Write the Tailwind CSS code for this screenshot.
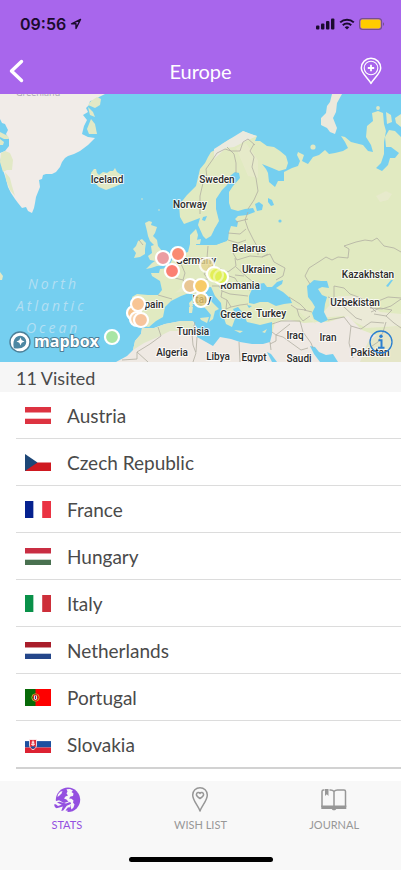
<!DOCTYPE html>
<html lang="en">
  <head>
    <meta charset="UTF-8" />
    <meta name="viewport" content="width=device-width, initial-scale=1.0" />
    <title>Europe - Stats</title>
    <script src="https://cdn.jsdelivr.net/npm/@tailwindcss/browser@4"></script>
  </head>
  <body class="bg-white font-['Lato',sans-serif] text-[#4a4a4a]">
    <div class="flex min-h-screen flex-col">
      <!-- ===== Header ===== -->
      <header class="bg-[#a866ec] text-white">
        <!-- Status bar -->
        <div class="flex h-12 items-center justify-between pr-4 pl-5 text-[#1b0b2e]">
          <div class="flex items-center gap-1">
            <span class="font-['Inter',sans-serif] text-[16px] leading-5 font-semibold">09:56</span>
            <svg class="size-3" viewBox="0 0 12 12" fill="none" stroke="currentColor" stroke-width="1.4" stroke-linejoin="round">
              <path d="M10.5 1.5 1.5 5.8H6v4.7z" />
            </svg>
          </div>
          <div class="flex items-center gap-1">
            <svg class="h-3 w-[19px]" viewBox="0 0 19 12" fill="currentColor">
              <rect x="0" y="7.5" width="3.4" height="4" rx="1" />
              <rect x="5" y="5.5" width="3.4" height="6" rx="1" />
              <rect x="10" y="3" width="3.4" height="8.5" rx="1" />
              <rect x="15" y="0.5" width="3.4" height="11" rx="1" />
            </svg>
            <svg class="h-3 w-4" viewBox="0 0 16 12" fill="none" stroke="currentColor" stroke-width="2">
              <path d="M1.2 4.4a9.8 9.8 0 0 1 13.6 0" />
              <path d="M3.8 7.3a6 6 0 0 1 8.4 0" />
              <path d="M8 11.6 5.7 9.3a3.3 3.3 0 0 1 4.6 0z" fill="currentColor" stroke="none" />
            </svg>
            <svg class="h-3 w-[26px]" viewBox="0 0 26 12">
              <rect x="0.6" y="0.6" width="22" height="10.8" rx="3" fill="none" stroke="#76508c" stroke-width="1.1" />
              <rect x="1.6" y="1.6" width="20" height="8.8" rx="1.8" fill="#ffcc00" />
              <path d="M24 4.2v3.6c1.4-.5 1.4-3.1 0-3.6z" fill="#76508c" />
            </svg>
          </div>
        </div>
        <!-- Title bar -->
        <div class="grid h-[46px] grid-cols-[1fr_auto_1fr] items-center px-2">
          <button aria-label="Back" class="justify-self-start">
            <svg class="h-6 w-4" viewBox="0 0 16 24" fill="none" stroke="currentColor" stroke-width="3.4" stroke-linecap="round" stroke-linejoin="round">
              <path d="M13.5 2.5 3.5 12l10 9.5" />
            </svg>
          </button>
          <h1 class="text-[20px] leading-6">Europe</h1>
          <button aria-label="Add place" class="justify-self-end pr-2">
            <svg class="h-7 w-7" viewBox="0 0 28 28" fill="none" stroke="currentColor" stroke-width="1.5">
              <path d="M14 26.5C11.5 21.5 4.3 16.5 4.3 11a9.7 9.7 0 0 1 19.4 0C23.7 16.5 16.5 21.5 14 26.5z" stroke-linejoin="round" />
              <circle cx="14" cy="11" r="6.8" stroke-width="1.1" />
              <path d="M14 7.8v6.4M10.8 11h6.4" stroke-width="1.8" />
            </svg>
          </button>
        </div>
      </header>

      <!-- ===== Map ===== -->
      <section class="relative" aria-label="Map">
        <svg class="block h-auto w-full" viewBox="0 94 401 268">
          <rect x="0" y="94" width="401" height="268" fill="#75cff0" />

          <!-- Greenland -->
          <path fill="#f1ece8" d="M0 94H105L99 97 95 100 90 101 89 105 86 108 88 112 83 115 87 120 84 126 82 134 88 137 95 138 88 145 80 151 74 154 68 156 65 158 62 162 60 167 56 172 52 174 46 174 43 175 42 179 39 180 40 187 38 192 36 197 35 203 34 208 32 213 28 211 26 207 22 208 18 203 15 199 11 193 8 187 6 179 3 170 0 158 0 153 5 151 9 146 9 139 6 134 8 130 5 124 2 123 0 119z" />
          <g fill="#e2e9c6">
            <path d="M1 153 5 151 10 153 13 160 12 170 7 170 3 172 0 162z" />
            <path d="M5 172 10 178 12 186 15 196 10 190 6 180z" />
            <path d="M91 101 97 97 101 99 100 105 95 108 88 105z" />
            <path d="M88 107 93 112 95 117 90 115z" />
            <path d="M91 119 95 124 97 134 89 134 87 129z" />
            <path d="M0 132 8 136 9 139 4 139 0 137z" />
            <path d="M0 139 4 142 3 145 0 145z" />
            <path d="M0 272 3 276 2 280 0 280z" />
          </g>

          <!-- Islands of the north and west -->
          <g fill="#e1e9c4">
            <path d="M91 173 94 169 96 169 97 173 99 175 103 172 107 173 110 171 113 171 115 168 117 172 120 174 123 179 121 184 114 187 106 190 99 187 96 184 97 179 92 177z" />
            <path d="M145 223 149 221 152 222 151 225 157 227 155 233 153 236 157 240 158 246 162 251 163 256 169 256 168 261 164 265 157 266 151 268 146 269 152 263 155 261 150 260 148 256 152 253 151 246 154 245 150 241 148 236 147 231z" />
            <path d="M133 249 136 246 138 241 142 239 146 243 145 249 145 254 140 257 134 258 136 253z" />
            <circle cx="313" cy="147" r="2.6" />
            <circle cx="378" cy="108" r="1.9" />
            <path d="M386 112 391 115 392 122 387 124z" />
            <path d="M395 118 401 114 401 127 396 123z" />
            <circle cx="142" cy="199" r=".8" />
            <circle cx="159" cy="210" r=".8" />
          </g>
          <path fill="#ece9dc" d="M332 94H342L337 103 336 112 333 118 337 128 335 134 330 132 327 128 321 125 321 118 326 113 327 106 330 102z" />

          <!-- Europe and Asia -->
          <path fill="#e1eac1" d="M200 169 205 163 208 157 211 152 217 149 222 144 230 139 238 137 243 131 250 134 257 136 255 141 260 141 267 146 274 147 280 151 286 156 288 163 286 169 279 171 272 168 262 164 266 169 268 173 269 182 275 187 278 181 284 181 284 172 292 168 298 166 300 161 297 155 298 152 304 155 302 161 308 164 313 157 319 155 325 150 329 154 335 153 343 151 348 148 345 142 341 136 345 137 351 142 363 145 368 151 373 152 371 145 366 137 367 126 373 121 372 113 378 111 383 113 384 124 386 131 384 142 384 154 381 163 376 168 382 171 388 165 390 158 395 158 399 153 391 147 386 147 385 137 389 130 395 131 401 137V362H262L272 340 272 322 260 325 247 322 243 313 238 307 233 309 236 316 232 327 226 324 224 318 222 311 221 303 215 296 211 287 205 288 206 295 212 302 219 309 215 311 213 319 209 322 211 315 206 309 200 303 195 295 189 293 181 296 175 299 171 301 165 307 163 317 156 321 149 327 142 326 138 323 131 322 132 312 134 304 132 297 137 294 148 295 158 295 162 290 160 281 152 276 151 273 159 273 160 269 168 268 172 260 181 254 188 252 190 244 190 235 196 229 198 235 196 245 203 245 215 245 227 241 228 228 222 222 215 228 211 236 206 239 203 236 198 225 200 218 192 221 184 224 180 217 179 205 187 195 196 186z" />
          <!-- Africa and Arabia -->
          <path fill="#efe9e3" d="M116 362 127 356 133 350 135 341 141 334 142 328 154 328 165 324 181 321 193 321 197 328 197 337 206 342 213 346 220 337 231 339 240 342 252 344 263 344 270 342 275 322 290 320 304 323 318 322 328 322 348 316 362 330 378 336 401 334V362z" />
          <path fill="#e1e8c8" d="M142 328 154 328 165 324 181 321 193 321 195 333 186 331 170 331 158 337 144 343 133 350 135 341 141 334z" />
          <path fill="#efeae0" d="M318 318 338 296 360 296 380 312 401 314V326L366 328 344 316z" opacity=".7" />
          <path fill="#e5e6c8" d="M368 342 386 328 401 326V362H360z" />
          <path fill="#e9ead0" d="M376 196 386 191 392 194 388 200 380 202z" opacity=".7" />
          <path fill="#ebeadf" d="M214 149 230 139 243 131 257 136 246 141 234 147 226 148 214 159z" />
          <path fill="#e7eacb" d="M175 293 188 281 198 282 190 290zM290 304 308 310 316 324 304 316zM236 148 246 143 258 160 258 178 248 176z" opacity=".8" />

          <!-- Inland seas, gulfs and lakes -->
          <g fill="#75cff0">
            <path d="M230 176 235 172 239 173 240 178 233 186 229 192 229 203 231 209 238 211 245 209 253 208 255 212 247 215 238 216 235 219 238 222 237 227 231 226 229 232 228 240 216 245 211 240 215 228 219 221 216 209 216 199 222 190 227 185z" />
            <path d="M255 204 259 202 263 205 262 210 257 211z" />
            <path d="M268 198 272 200 274 205 271 206 268 202z" />
            <circle cx="280" cy="221" r="1.6" />
            <path d="M203 217 207 216 205 221 202 220z" />
            <path d="M249 296 253 287 258 284 264 283 267 287 272 287 277 282 283 280 282 284 276 288 283 292 290 298 292 303 284 304 276 306 268 302 260 302 254 304 249 303z" />
            <path d="M247 305 252 306 249 308z" />
            <path d="M307 286 314 280 321 281 327 281 329 288 322 287 318 289 322 295 327 297 325 304 324 312 328 320 321 323 314 319 312 313 315 307 312 302 308 297z" />
            <path d="M310 346 315 347 319 352 326 355 333 354 338 362H320L314 354z" />
            <path d="M267 352 271 354 277 362H272z" />
            <path d="M386 286 391 280 393 280 388 287zM334 299 337 300 336 304 334 303z" />
          </g>
          <!-- Mediterranean islands and Denmark -->
          <g fill="#e1e9c4">
            <path d="M189 303 192 300 193 306 190 308zM189 307 193 307 192 313 189 313zM200 318 209 317 207 323 201 320zM234 330 243 331 240 333zM262 332 267 329 265 333z" />
            <path d="M196 240 201 239 200 244 196 244z" />
          </g>

          <!-- Country borders -->
          <g fill="none" stroke="#b1afa2" stroke-width=".8" stroke-linejoin="round">
            <path d="M200 214 200 196 203 183 207 178 206 169 213 159 217 153 225 149 231 151 240 151 243 142 248 139 255 145" />
            <path d="M227 147 234 154 236 163 236 173M254 144 250 151 254 157 252 167 256 178 258 191 254 200 248 209" />
            <path d="M248 212 245 220 248 229 253 239 258 248 258 255M236 222 248 219M228 233 240 234 246 229M228 240 238 243 246 240" />
            <path d="M232 243 233 253 237 260 250 256 262 257 268 254M208 246 207 258 209 266 218 268 228 272 236 266 235 258" />
            <path d="M262 257 270 254 274 262 285 268 283 276 276 280M177 258 182 266 185 273 183 280 175 278 169 272M183 280 188 286 189 293M188 281 198 280 208 279 214 276 226 275 235 278 240 286 250 290M209 266 204 274 209 280" />
            <path d="M212 286 219 286 222 291 230 294 248 296M222 291 221 297 227 300 231 307 240 305 248 304M227 300 226 309 231 307M236 267 248 278 256 284M235 275 244 276" />
            <path d="M158 295 172 299M138 300 137 310 136 321M134 299 142 301M139 240 143 245" />
            <path d="M289 297 300 304 306 310 297 309 291 305M297 309 299 316 303 321 310 316M304 310 312 312" />
            <path d="M272 324 281 321 300 321 303 332 311 343 313 348M272 332 276 335 290 324M270 344 276 341 276 335 283 337 301 350 308 348" />
            <path d="M320 261 309 268 305 276 310 284M320 261 326 257 332 260 338 257 348 258 349 249 344 246 356 242 365 240 372 241 377 238 384 246 394 248 401 252" />
            <path d="M328 297 334 299 334 286 344 288 350 294 361 298 370 306 376 312M334 299 344 307 356 318 362 320M328 320 344 317 351 326 349 343 353 358M351 326 361 329 371 322 384 323M401 298 388 297 376 302 370 308 382 309 391 306 401 299M371 312 380 308 392 310 386 316 374 314M386 316 394 323 401 328M366 350 378 342 383 332 386 322" />
            <path d="M195 322 192 334 193 345M158 327 161 336 150 344 137 352 137 359 122 360M193 345 196 353 193 362M197 337 196 352M239 342 240 362M137 352 148 362M270 342 271 350" />
          </g>

          <!-- Sea label -->
          <g fill="#b3dff3" font-family="Open Sans, sans-serif" font-style="italic" font-size="14" letter-spacing="3">
            <text x="28" y="289">North</text>
            <text x="16" y="311">Atlantic</text>
            <text x="26" y="333">Ocean</text>
          </g>
          <text x="16" y="96" fill="#a9a3b5" font-family="Open Sans, sans-serif" font-size="9">Greenland</text>

          <!-- Country labels -->
          <g fill="#2b2b2b" stroke="#ffffff" stroke-opacity=".8" stroke-width="2" stroke-linejoin="round" paint-order="stroke" font-family="Roboto, sans-serif" font-weight="500" font-size="10" text-anchor="middle">
            <text x="107" y="183">Iceland</text>
            <text x="217" y="183">Sweden</text>
            <text x="190" y="208">Norway</text>
            <text x="249" y="252">Belarus</text>
            <text x="259" y="273">Ukraine</text>
            <text x="240" y="289">Romania</text>
            <text x="196" y="264">Germany</text>
            <text x="202" y="303">Italy</text>
            <text x="151" y="308">Spain</text>
            <text x="368" y="278">Kazakhstan</text>
            <text x="355" y="306">Uzbekistan</text>
            <text x="236" y="318">Greece</text>
            <text x="271" y="317">Turkey</text>
            <text x="193" y="335">Tunisia</text>
            <text x="172" y="356">Algeria</text>
            <text x="218" y="360">Libya</text>
            <text x="254" y="361">Egypt</text>
            <text x="299" y="362">Saudi</text>
            <text x="295" y="339">Iraq</text>
            <text x="328" y="341">Iran</text>
            <text x="370" y="356">Pakistan</text>
          </g>

          <!-- Visited places -->
          <g stroke="#ffffff" stroke-width="2.2">
            <circle cx="163" cy="258" r="7" fill="#eb9da2" />
            <circle cx="178" cy="254" r="7" fill="#fa8b72" />
            <circle cx="172" cy="271" r="7" fill="#fb8073" />
            <circle cx="207" cy="265" r="7" fill="#e5d48f" fill-opacity=".8" stroke-opacity=".8" />
            <circle cx="214" cy="274" r="7" fill="#e3ee58" />
            <circle cx="221" cy="277" r="7" fill="#dcf052" />
            <circle cx="216" cy="275" r="7" fill="#e3ee58" fill-opacity=".6" stroke-opacity=".5" />
            <circle cx="190" cy="286" r="7" fill="#e9c694" />
            <circle cx="201" cy="300" r="7" fill="#e7c873" fill-opacity=".8" />
            <circle cx="201" cy="286" r="7" fill="#f7cb68" />
            <circle cx="134" cy="313" r="7" fill="#f6c38c" />
            <circle cx="137" cy="319" r="7" fill="#f8d4b0" />
            <circle cx="138" cy="304" r="7" fill="#f8c595" />
            <circle cx="141" cy="320" r="7" fill="#f7c49c" />
            <circle cx="112" cy="337" r="7" fill="#a9e5a4" />
          </g>
        </svg>

        <a href="#mapbox" aria-label="Mapbox" class="absolute bottom-2 left-2">
          <svg class="h-6 w-24" viewBox="0 0 96 24">
            <circle cx="12" cy="12" r="10" fill="#ffffff" stroke="#4d7f98" stroke-width="1.4" />
            <path d="M5.8 18.2C4.8 13 5.5 9.8 8 7.3a6.2 6.2 0 0 1 8.7 8.8C14 18.6 10.5 19 5.8 18.2z" fill="#4d87a2" />
            <path d="M12.5 7.5 13.7 10.3 16.5 11.5 13.7 12.7 12.5 15.5 11.3 12.7 8.5 11.5 11.3 10.3z" fill="#ffffff" />
            <text x="26" y="17" fill="#ffffff" stroke="#4d7f98" stroke-width="2" stroke-linejoin="round" paint-order="stroke" font-family="Open Sans, sans-serif" font-weight="700" font-size="16">mapbox</text>
          </svg>
        </a>
        <button aria-label="Map information" class="absolute right-2 bottom-2">
          <svg class="size-6" viewBox="0 0 24 24" fill="none" stroke="#2b7fd0">
            <circle cx="12" cy="12" r="11" stroke-width="1.3" />
            <circle cx="12" cy="6.3" r="1.7" fill="#2b7fd0" stroke="none" />
            <path d="M9.5 10.3h3v7.2M9 17.7h6.5" stroke-width="2" />
          </svg>
        </button>
      </section>

      <!-- ===== Visited countries ===== -->
      <main class="flex-1">
        <h2 class="h-[30px] bg-[#f6f6f6] px-4 text-[18px] leading-8">11 Visited</h2>
        <ul class="pl-4 text-[19px] leading-6">
          <li class="border-b border-[#dcdcdc]">
            <a href="#austria" class="flex h-[46px] items-center gap-4 pl-[9px]">
              <svg class="h-[17px] w-[26px]" viewBox="0 0 26 17">
                <path fill="#dd3341" d="M0 0h26v5.7H0z" />
                <path fill="#ffffff" d="M0 5.7h26v6H0z" />
                <path fill="#dd3341" d="M0 11.7h26V17H0z" />
              </svg>
              <span class="pt-0.5">Austria</span>
            </a>
          </li>
          <li class="border-b border-[#dcdcdc]">
            <a href="#czech-republic" class="flex h-[46px] items-center gap-4 pl-[9px]">
              <svg class="h-[17px] w-[26px]" viewBox="0 0 26 17">
                <path fill="#ffffff" d="M0 0h26v8.5H0z" />
                <path fill="#cf1920" d="M0 8.5h26V17H0z" />
                <path fill="#1d4777" d="M0 0 12.5 8.5 0 17z" />
              </svg>
              <span class="pt-0.5">Czech Republic</span>
            </a>
          </li>
          <li class="border-b border-[#dcdcdc]">
            <a href="#france" class="flex h-[46px] items-center gap-4 pl-[9px]">
              <svg class="h-[17px] w-[26px]" viewBox="0 0 26 17">
                <path fill="#05218f" d="M0 0h8.6v17H0z" />
                <path fill="#ffffff" d="M8.6 0h8.6v17H8.6z" />
                <path fill="#ea3343" d="M17.2 0H26v17h-8.8z" />
              </svg>
              <span class="pt-0.5">France</span>
            </a>
          </li>
          <li class="border-b border-[#dcdcdc]">
            <a href="#hungary" class="flex h-[46px] items-center gap-4 pl-[9px]">
              <svg class="h-[17px] w-[26px]" viewBox="0 0 26 17">
                <path fill="#c92e43" d="M0 0h26v5.7H0z" />
                <path fill="#ffffff" d="M0 5.7h26v6H0z" />
                <path fill="#497150" d="M0 11.7h26V17H0z" />
              </svg>
              <span class="pt-0.5">Hungary</span>
            </a>
          </li>
          <li class="border-b border-[#dcdcdc]">
            <a href="#italy" class="flex h-[46px] items-center gap-4 pl-[9px]">
              <svg class="h-[17px] w-[26px]" viewBox="0 0 26 17">
                <path fill="#099149" d="M0 0h8.6v17H0z" />
                <path fill="#ffffff" d="M8.6 0h8.6v17H8.6z" />
                <path fill="#cd2f3a" d="M17.2 0H26v17h-8.8z" />
              </svg>
              <span class="pt-0.5">Italy</span>
            </a>
          </li>
          <li class="border-b border-[#dcdcdc]">
            <a href="#netherlands" class="flex h-[46px] items-center gap-4 pl-[9px]">
              <svg class="h-[17px] w-[26px]" viewBox="0 0 26 17">
                <path fill="#a91d2a" d="M0 0h26v5.7H0z" />
                <path fill="#ffffff" d="M0 5.7h26v6H0z" />
                <path fill="#24468a" d="M0 11.7h26V17H0z" />
              </svg>
              <span class="pt-0.5">Netherlands</span>
            </a>
          </li>
          <li class="border-b border-[#dcdcdc]">
            <a href="#portugal" class="flex h-[46px] items-center gap-4 pl-[9px]">
              <svg class="h-[17px] w-[26px]" viewBox="0 0 26 17">
                <path fill="#fe0000" d="M0 0h26v17H0z" />
                <path fill="#076a08" d="M0 0h10.5v17H0z" />
                <circle cx="10.5" cy="8.5" r="3.7" fill="none" stroke="#b9a92b" stroke-width="1" />
                <path fill="#f3dcdc" stroke="#d41a1a" stroke-width="1" d="M8.5 6h4v3.5a2 2 0 0 1-4 0z" />
                <path fill="#24407e" d="M10 7h1v3h-1z" />
              </svg>
              <span class="pt-0.5">Portugal</span>
            </a>
          </li>
          <li class="border-b-2 border-[#d2d2d2]">
            <a href="#slovakia" class="flex h-[46px] items-center gap-4 pl-[9px]">
              <svg class="h-[17px] w-[26px]" viewBox="0 0 26 17">
                <path fill="#ffffff" d="M0 0h26v5.7H0z" />
                <path fill="#1c50a0" d="M0 5.1h26v6.4H0z" />
                <path fill="#dd2232" d="M0 11.5h26V17H0z" />
                <path fill="#e02a38" stroke="#ffffff" stroke-width=".8" d="M4.5 3.5h7v5.500c0 2.500-1.500 3.800-3.500 4.700-2-.9-3.500-2.200-3.500-4.700z" />
                <path d="M8 4.5v6M6.7 6.2h2.6M6 8.2h4" stroke="#ffffff" stroke-width="1" />
                <path fill="#1c50a0" d="M5.5 11.5c.8-1.2 1.7-1 2.5-1.5.8.5 1.7.3 2.5 1.5L8 13z" />
              </svg>
              <span class="pt-0.5">Slovakia</span>
            </a>
          </li>
        </ul>
      </main>

      <!-- ===== Tab bar ===== -->
      <footer class="bg-[#f8f8f8] pb-2">
        <nav class="grid grid-cols-3 pt-1 text-[11px] leading-4 text-[#979797]">
          <a href="#stats" class="flex flex-col items-center gap-1 text-[#9450e0]">
            <svg class="size-7" viewBox="0 0 28 28">
              <circle cx="15" cy="14.8" r="12.2" fill="currentColor" />
              <g fill="#f8f8f8">
                <path d="M13.5 4.2 17 4 20 5.5 18.5 7 20.5 8.5 20 11 17.5 11.5 16 13.5 18.5 13.8 20.5 15.5 20 17.5 21.5 19.5 20.5 22.5 18.5 24.5 17.5 21.5 17.8 18.5 15.5 16.8 13.5 14.5 11 13.5 12.5 11.5 15 10.5 13.5 8.5 14.5 6.5z" />
                <path d="M5 9.5 7.2 6.8 9.5 6 8.5 8.5 6.5 10.5 4.5 12z" />
                <path d="M1 16.5 6 15.3 11 18 16.5 16.2 18.5 18.5 17.5 20.5 14 27.5H1z" />
              </g>
              <path fill="currentColor" d="M1 19.5 2.800 19.200 5 21l3.800-1.200L4 17.500 6.200 16.800 13 18.400l3.200-1.100c1.800-.4 2.600 1.100 1 2l-3.400 1.500-3.600 4.700-1.900.6 1.500-4.500-5.200 1.500c-1.400.3-2.100-.1-2.700-1z" />
              <path fill="currentColor" d="M12.5 25.5 15 22.3 17 22.8 18 26z" />
            </svg>
            STATS
          </a>
          <a href="#wish-list" class="flex flex-col items-center gap-1">
            <svg class="size-7" viewBox="0 0 28 28" fill="none" stroke="currentColor" stroke-width="1.5" stroke-linejoin="round">
              <path d="M14 26C12 20.5 6.7 15.5 6.7 10a7.3 7.3 0 0 1 14.6 0C21.3 15.5 16 20.5 14 26z" />
              <path d="M14 13.5c-2-1.2-3.6-2.4-3.6-4 0-2.2 2.7-2.7 3.6-1 .9-1.7 3.6-1.2 3.6 1 0 1.6-1.6 2.8-3.6 4z" />
            </svg>
            WISH LIST
          </a>
          <a href="#journal" class="flex flex-col items-center gap-1">
            <svg class="size-7" viewBox="0 0 28 28" fill="none" stroke="currentColor" stroke-width="1.5" stroke-linejoin="round">
              <path d="M14 22V6.500C14.800 5.500 15.800 5 17.500 5H24c1 0 1.500.5 1.500 1.500V22M14 6.500C13.200 5.500 12.200 5 10.500 5H9.500M2 22V6.500C2 5.500 2.500 5 3.500 5H4.500" />
              <path d="M1.3 20.5h25v3.5H16.200c-.3 1-1 1.300-2.200 1.300s-1.900-.3-2.200-1.300H1.300z" fill="currentColor" stroke="none" />
              <path d="M5 4h3.5v7L6.8 9.3 5 11z" fill="currentColor" stroke="none" />
            </svg>
            JOURNAL
          </a>
        </nav>
        <div class="mx-auto mt-6 h-[5px] w-36 rounded-full bg-black"></div>
      </footer>
    </div>
  </body>
</html>
